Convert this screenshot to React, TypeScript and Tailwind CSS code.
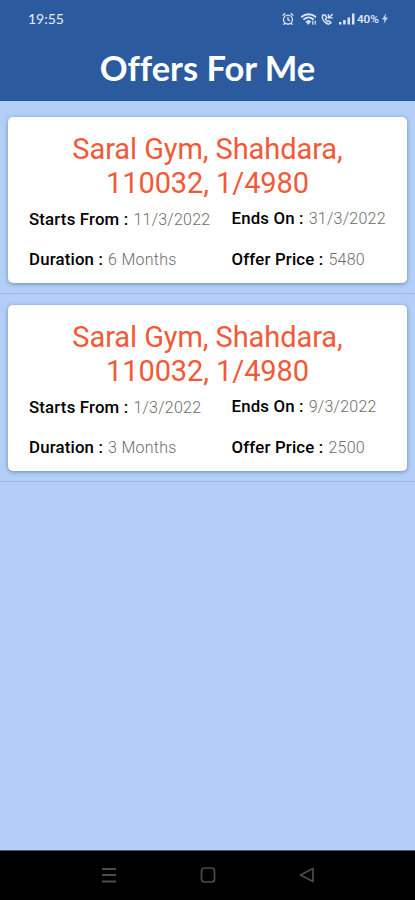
import React from 'react';

interface Offer {
  title: string[];
  startsFrom: string;
  endsOn: string;
  duration: string;
  price: string;
}

const offers: Offer[] = [
  {
    title: ['Saral Gym, Shahdara,', '110032, 1/4980'],
    startsFrom: '11/3/2022',
    endsOn: '31/3/2022',
    duration: '6 Months',
    price: '5480',
  },
  {
    title: ['Saral Gym, Shahdara,', '110032, 1/4980'],
    startsFrom: '1/3/2022',
    endsOn: '9/3/2022',
    duration: '3 Months',
    price: '2500',
  },
];

const StatusIcons: React.FC = () => (
  <svg width="76" height="16" viewBox="0 0 76 16" fill="none" stroke="#d9e6f7" strokeWidth="1.3" strokeLinecap="round" strokeLinejoin="round">
    {/* Alarm */}
    <circle cx="7" cy="8.6" r="4.5" />
    <path d="M7 6.4v2.5l1.6.6M2 4.2l1.9-1.6M12 4.2l-1.9-1.6M3.6 12.4l-.8 1M10.4 12.4l.8 1" />
    {/* Wifi */}
    <path d="M20.8 5.8c3.9-3.4 9.7-3.4 13.6 0M23 8.2c2.7-2.3 6.5-2.3 9.2 0" strokeWidth="1.8" />
    <path d="M25.2 10.4c1.4-1.1 3.2-1.1 4.6 0l-2.3 2.8z" fill="#d9e6f7" strokeWidth="0.8" />
    <path d="M31.8 13.2v-3M34.2 10.2v3" strokeWidth="1.2" />
    {/* Call over wifi */}
    <path d="M41.6 4c-1.3 3.4 2 8.6 6 9.2l2.6-1.5-2.3-1.8-1.4.6c-1.1-.6-1.8-1.7-2-2.8l1.1-1-1.3-2.7z" strokeWidth="1.4" />
    <path d="M47.4 6.8l4-3.3M47.4 3.6v3.3h3.7" strokeWidth="1.4" />
    {/* Signal */}
    <path d="M59.2 11V13.4M63.4 9V13.4M67.8 6.4V13.4M72.2 2.6V13.4" strokeWidth="2.5" strokeLinecap="butt" />
  </svg>
);

const Field: React.FC<{ label: string; value: string; shift?: boolean }> = ({ label, value, shift }) => (
  <div className={`flex h-5 items-center whitespace-nowrap leading-5 ${shift ? '-mt-px' : ''}`}>
    <span className="-mt-0.5 text-[16.8px] font-medium tracking-[0.18px] text-black">{label} :</span>
    <span className="-mt-px ml-[5px] text-[16px] font-light tracking-[0.25px] text-[#6c6c6c]">{value}</span>
  </div>
);

const OfferCard: React.FC<{ offer: Offer }> = ({ offer }) => (
  <li className="h-[188px] border-b border-[#9fb9e0] px-2 pt-[11px]">
    <div className="h-[166px] rounded-[5px] bg-white pt-[15px] shadow-[0_1px_4px_rgba(40,70,120,0.5)]">
      <h2 className="text-center text-[29px] leading-[34px] font-normal tracking-[-0.08px] text-[#f15a38]">
        {offer.title.map((line) => (
          <span key={line} className="block">{line}</span>
        ))}
      </h2>
      <div className="mt-[10px] grid grid-cols-[202.5px_1fr] gap-y-[20px] pl-[21px]">
        <Field label="Starts From" value={offer.startsFrom} />
        <Field label="Ends On" value={offer.endsOn} shift />
        <Field label="Duration" value={offer.duration} />
        <Field label="Offer Price" value={offer.price} />
      </div>
    </div>
  </li>
);

const App: React.FC = () => {
  return (
    <div className="flex h-[900px] w-full flex-col overflow-hidden bg-[#b3cff7] font-['Roboto','Liberation_Sans',sans-serif]">
      {/* Header */}
      <header className="h-[101px] border-b border-[#245394] bg-[#2b5b9e]">
        <div className="flex h-[37px] items-center pr-[26px] pl-[28px] text-[#e3edf9]">
          <span className="text-[14px] font-['Lato',sans-serif]">19:55</span>
          <div className="ml-auto flex items-center">
            <StatusIcons />
            <span className="text-[11.8px] leading-4 font-medium">40%</span>
            <svg width="8" height="13" viewBox="0 0 8 13" className="ml-[2px]" fill="#bcd2ee">
              <path d="M5.2 1L1 7.4h2.5L2.6 12 7 5.5H4.4z" />
            </svg>
          </div>
        </div>
        <h1 className="text-center text-[34.5px] leading-[62px] font-bold text-white [font-variant-ligatures:none] font-['Lato',sans-serif]">Offers For Me</h1>
      </header>

      {/* Offers */}
      <main className="flex-1 pt-[5px]">
        <ul>
          {offers.map((offer, idx) => (
            <OfferCard key={idx} offer={offer} />
          ))}
        </ul>
      </main>

      {/* Navigation bar */}
      <nav className="flex h-[50px] items-center justify-center gap-[83px] border-t border-[#4c586b] bg-black pb-[2px]">
        <svg width="16" height="18" viewBox="0 0 16 18" stroke="#4c4c4c" strokeWidth="2">
          <path d="M1 3h14M1 9h14M1 15.5h14" />
        </svg>
        <svg width="16" height="18" viewBox="0 0 16 18" fill="none" stroke="#4c4c4c" strokeWidth="1.7">
          <rect x="1.5" y="2" width="13" height="14" rx="3" />
        </svg>
        <svg width="16" height="18" viewBox="0 0 16 18" fill="none" stroke="#4c4c4c" strokeWidth="1.7" strokeLinejoin="round">
          <path d="M14 2.5v13L1.5 9z" />
        </svg>
      </nav>
    </div>
  );
};

export default App;
